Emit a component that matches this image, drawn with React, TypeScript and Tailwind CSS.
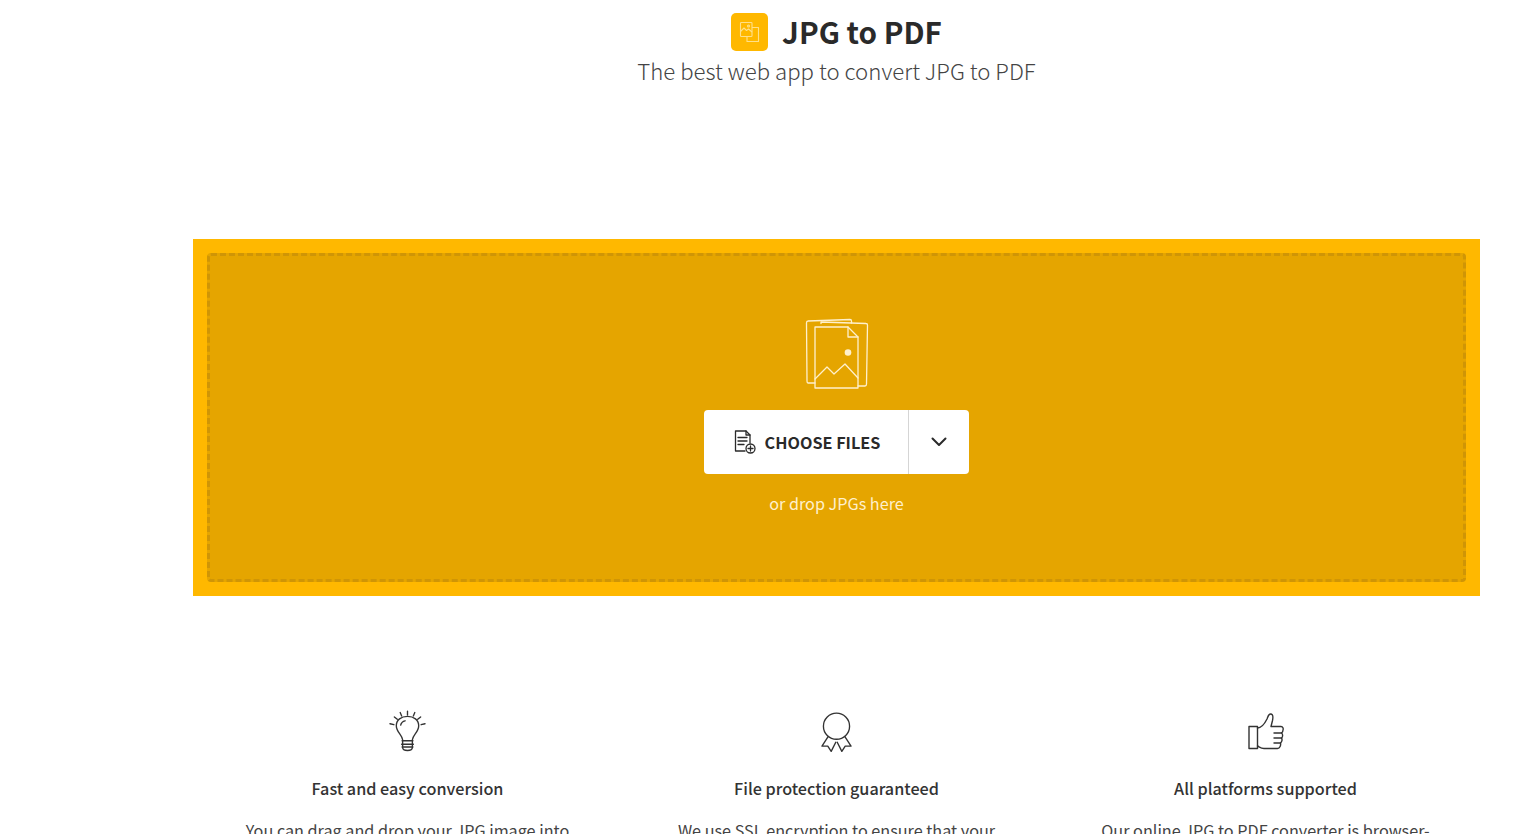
const FONT = "font-['Noto_Sans_CJK_JP','Noto_Sans',sans-serif]";

function ToolIcon() {
  return (
    <div className="flex h-[38px] w-[37px] items-center justify-center rounded-[5px] bg-[#ffb800]">
      <svg width="24" height="24" viewBox="0 0 24 24" fill="none" stroke="#ffe08a" strokeWidth="1.100" strokeLinejoin="round">
        <rect x="2.500" y="2.500" width="11.500" height="14" rx="0.800" />
        <path d="M2.500 11.500 L6 8 L8.500 10.500 L10.500 9 L14 12" />
        <circle cx="10.500" cy="6" r="1" />
        <path d="M14 7.500 H20.500 V21.500 H9 V16.500" />
      </svg>
    </div>
  );
}

function ImagesIcon() {
  return (
    <svg width="64" height="72" viewBox="0 0 64 72" fill="none" stroke="#fff0cc" strokeWidth="1.300" strokeLinejoin="round" strokeLinecap="round">
      <path d="M10 65 L3 65 Q2 65 2 63 L1.500 5 Q1.500 3 3 3 L45 1.500 Q46.500 1.500 46.500 3 L46.500 5" />
      <path d="M16 5.500 L16 4 L61 5.500 Q62.500 5.500 62.500 7 L61.500 66 Q61.500 68 60 68 L53 68" />
      <path d="M10 9 H43 L53 19 V70 H10 Z" />
      <path d="M43 9 V19 H53" />
      <path d="M10 61 L22 49 L29 56 L40 46 L53 60" />
      <circle cx="43" cy="34.500" r="3.300" fill="#fff0cc" stroke="none" />
    </svg>
  );
}

function ChooseIcon() {
  return (
    <svg width="22" height="24" viewBox="0 0 22 24" fill="none" stroke="#2a2a2a" strokeWidth="1.300" strokeLinejoin="round" strokeLinecap="round">
      <path d="M11 21 H1.500 V1 H12 L16 5 V13" />
      <path d="M12 1 V5 H16" />
      <path d="M4 7.500 H13 M4 11 H13 M4 14.500 H10" />
      <circle cx="16.500" cy="18.500" r="4.500" />
      <path d="M16.500 16 V21 M14 18.500 H19" />
    </svg>
  );
}

function BulbIcon() {
  return (
    <svg className="mb-[2px] mr-[1px]" width="37" height="44" viewBox="0 0 38 44" fill="none" stroke="#333" strokeWidth="1.400" strokeLinecap="round" strokeLinejoin="round">
      <path d="M19 0.500 V4.500 M11.500 2 L13 5.500 M26.500 2 L25 5.500 M5.500 6.500 L8.500 9 M32.500 6.500 L29.500 9 M1 13.500 L5 14.500 M37 13.500 L33 14.500" />
      <path d="M14 30 C13.500 25 7.500 22 7.500 15.500 C7.500 9.500 12.500 6 19 6 C25.500 6 30.500 9.500 30.500 15.500 C30.500 22 24.500 25 24 30" />
      <path d="M12 15 C12.500 12.500 14 11 16.500 10.500" />
      <path d="M13.500 31 H24.500 M13 34.500 H25 M13.500 37.500 H24.500" strokeWidth="1.500" />
      <path d="M14 31 V38 C14 40 16 41 19 41 C22 41 24 40 24 38 V31" />
    </svg>
  );
}

function AwardIcon() {
  return (
    <svg className="mb-[1px]" width="31" height="41" viewBox="0 0 32 42" fill="none" stroke="#333" strokeWidth="1.400" strokeLinejoin="round">
      <circle cx="16" cy="14.500" r="13.500" />
      <path d="M7.500 25 L1 35 L7 35 L10.500 40.500 L15.500 30.500" />
      <path d="M24.500 25 L31 35 L25 35 L21.500 40.500 L16.500 30.500" />
    </svg>
  );
}

function ThumbIcon() {
  return (
    <svg className="mb-[3px]" width="36" height="38" viewBox="0 0 36 38" fill="none" stroke="#333" strokeWidth="1.400" strokeLinejoin="round" strokeLinecap="round">
      <rect x="1" y="13.500" width="8.500" height="22" />
      <path d="M9.500 15 C13 15 17 10 19 6 C20 3.500 20.500 0.500 23 1 C25.500 1.500 25 5 24.500 7.500 L23 13.500 H33 C35 13.500 35.500 15.500 35 17 C35 18.500 34.500 19.500 33.500 20 C35 21 35 24 33.500 25 C34.500 26.500 34 29 32.500 30 C33 32 32 35.500 29.500 35.500 H16 C13 35.500 11.500 34 9.500 33" />
      <path d="M26 20 H33.500 M26 25 H33.500 M26 30 H32.500" />
    </svg>
  );
}

const features = [
  { icon: <BulbIcon />, title: "Fast and easy conversion", body: "You can drag and drop your JPG image into" },
  { icon: <AwardIcon />, title: "File protection guaranteed", body: "We use SSL encryption to ensure that your" },
  { icon: <ThumbIcon />, title: "All platforms supported", body: "Our online JPG to PDF converter is browser-" },
];

export default function App() {
  return (
    <div className={`h-[834px] overflow-hidden bg-white pl-[193px] pr-[56px] text-[#2c2c2c] ${FONT}`}>
      <header className="flex flex-col items-center pt-[13px]">
        <div className="flex h-[38px] items-center gap-[14px]">
          <ToolIcon />
          <h1 className="text-[29.600px] font-bold leading-[38px] text-[#2a2a2a]">JPG to PDF</h1>
        </div>
        <p className="-mt-[1px] text-[22.200px] font-light leading-[40px] text-[#444]">The best web app to convert JPG to PDF</p>
      </header>

      <section className="mt-[149px] h-[357px] bg-[#ffb800] p-[14px]">
        <div className="flex h-full flex-col items-center rounded-[4px] border-[3px] border-dashed border-[#cf9506] bg-[#e5a500] pt-[62px]">
          <ImagesIcon />
          <div className="mt-[20px] flex h-[64px] w-[265px] rounded-[4px] bg-white">
            <button className="flex flex-1 items-center justify-center gap-[9px] pl-[2px]">
              <ChooseIcon />
              <span className="text-[16.200px] font-bold text-[#2a2a2a]">CHOOSE FILES</span>
            </button>
            <button className="flex w-[61px] items-center justify-center border-l border-[#d5d5d5]">
              <svg width="16" height="10" viewBox="0 0 16 10" fill="none" stroke="#2a2a2a" strokeWidth="2" strokeLinecap="round" strokeLinejoin="round">
                <path d="M1.500 1.500 L8 8 L14.500 1.500" />
              </svg>
            </button>
          </div>
          <p className="mt-[15px] text-[16.200px] leading-[28px] text-[#fff0cc]">or drop JPGs here</p>
        </div>
      </section>

      <section className="mt-[114px] grid grid-cols-3">
        {features.map((f) => (
          <div key={f.title} className="flex flex-col items-center">
            <div className="flex h-[46px] items-center justify-center">{f.icon}</div>
            <h3 className="mt-[17px] text-[16.200px] font-medium leading-[30px] text-[#333]">{f.title}</h3>
            <p className="mt-[14px] text-[16.200px] leading-[26px] text-[#444]">{f.body}</p>
          </div>
        ))}
      </section>
    </div>
  );
}
